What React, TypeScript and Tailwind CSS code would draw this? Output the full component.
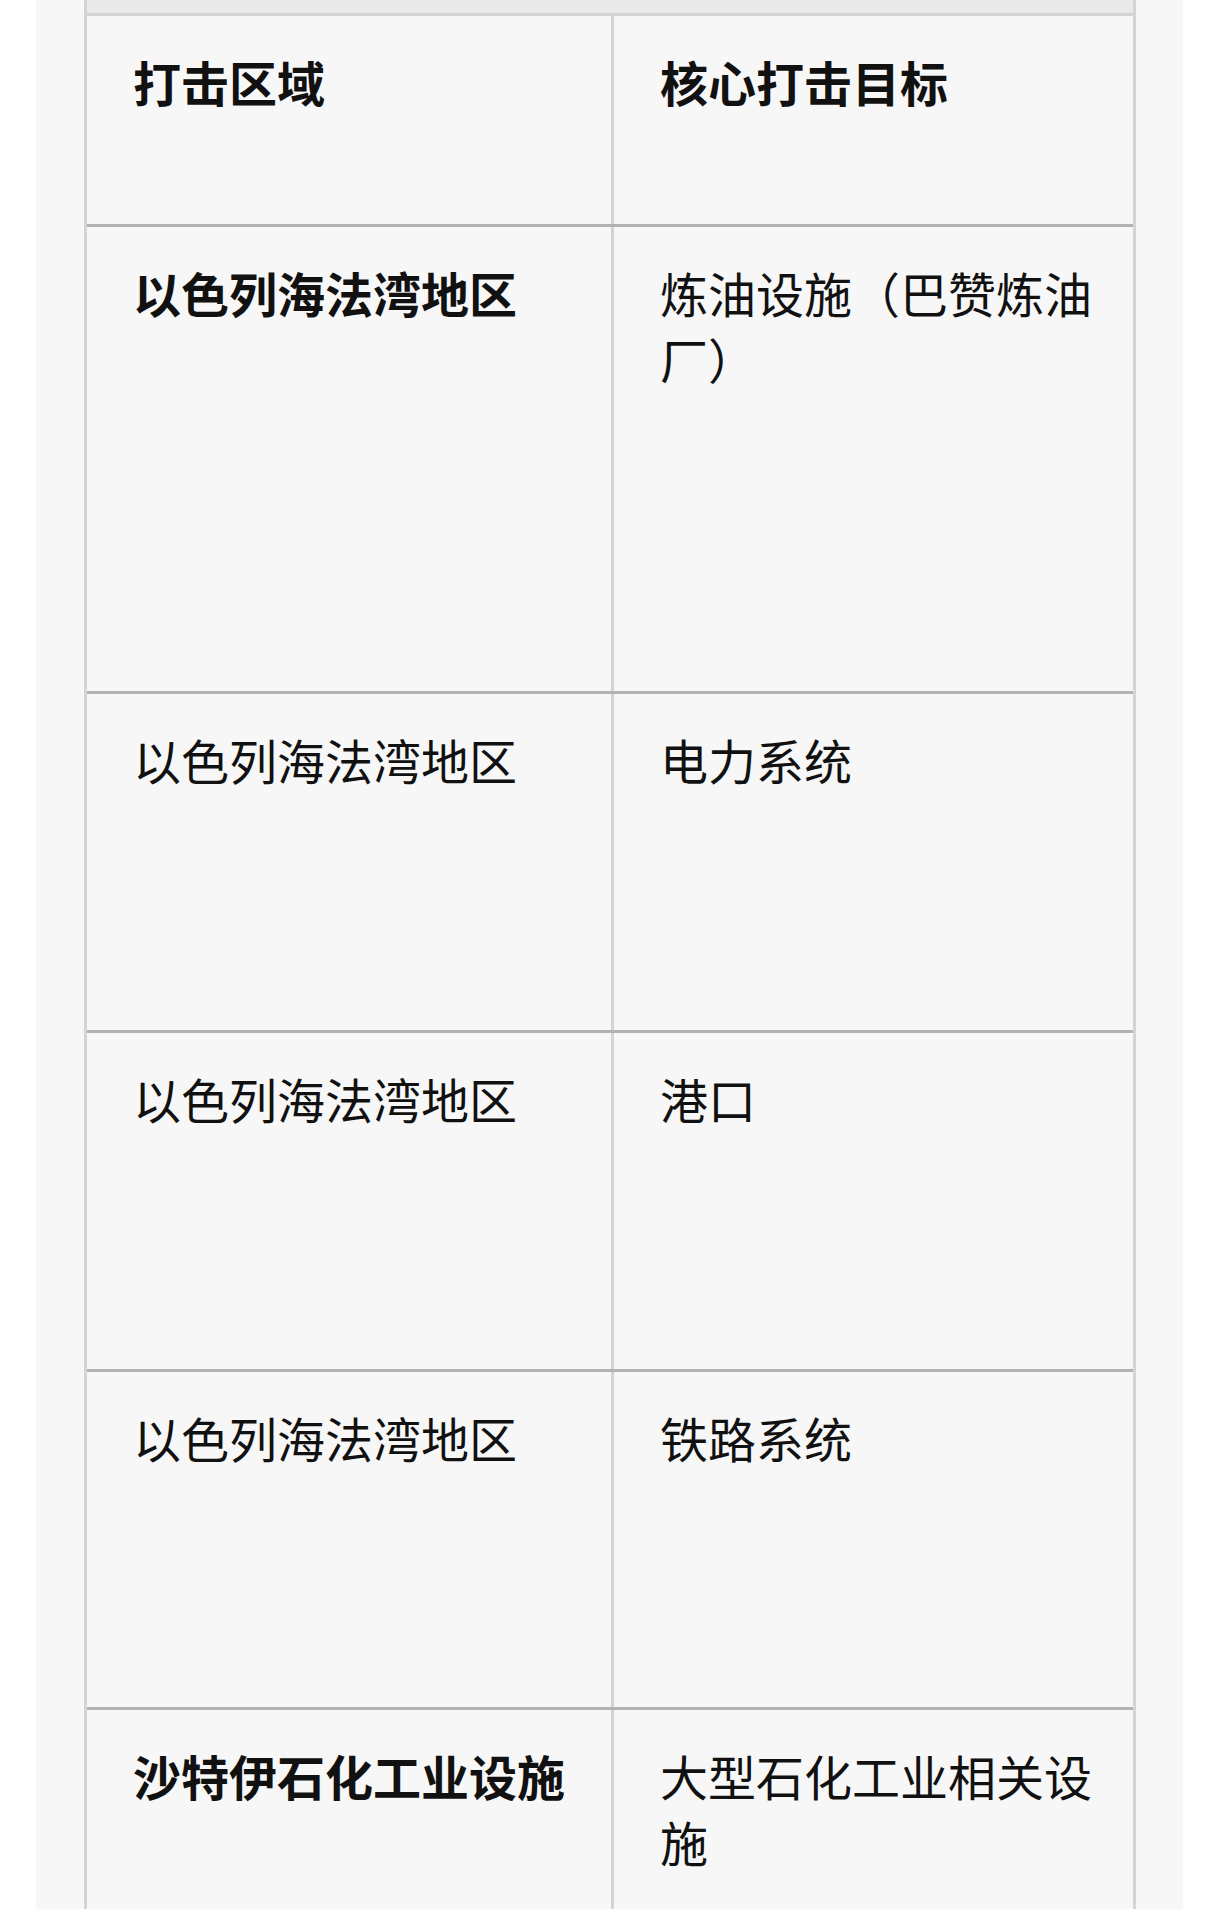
import React from "react";

type Row = { left: string; right: string; leftBold?: boolean; rightBold?: boolean; h: string };

const rows: Row[] = [
  { left: "打击区域", right: "核心打击目标", leftBold: true, rightBold: true, h: "h-[211px]" },
  { left: "以色列海法湾地区", right: "炼油设施（巴赞炼油厂）", leftBold: true, h: "h-[467px]" },
  { left: "以色列海法湾地区", right: "电力系统", h: "h-[339px]" },
  { left: "以色列海法湾地区", right: "港口", h: "h-[339px]" },
  { left: "以色列海法湾地区", right: "铁路系统", h: "h-[338px]" },
  { left: "沙特伊石化工业设施", right: "大型石化工业相关设施", leftBold: true, h: "h-[339px]" },
];

export default function App() {
  return (
    <div className="h-[1909px] w-[1220px] overflow-hidden bg-white">
      <div
        className="ml-[36px] w-[1147px] h-full bg-[#f7f7f7] pl-[48px]"
        style={{ fontFamily: '"Noto Sans CJK SC", "Noto Sans", sans-serif' }}
      >
        <div className="w-[1052px] border-x-[3px] border-[#d4d4d4]">
          <div className="h-[16px] bg-[#e9e9e9] border-b-[3px] border-[#d3d3d3]" />
          {rows.map((r, i) => (
            <div
              key={i}
              className={`flex ${r.h} ${i < rows.length - 1 ? "border-b-[3px] border-[#b3b3b3]" : ""}`}
            >
              <div
                className={`w-[527px] shrink-0 border-r-[3px] border-[#d4d4d4] pl-[46px] pr-[40px] pt-[32px] text-[48px] leading-[66px] text-[#111] ${
                  r.leftBold ? "font-bold" : "font-normal"
                }`}
              >
                {r.left}
              </div>
              <div
                className={`w-[519px] shrink-0 pl-[46px] pr-[40px] pt-[32px] text-[48px] leading-[66px] text-[#111] ${
                  r.rightBold ? "font-bold" : "font-normal"
                }`}
              >
                {r.right}
              </div>
            </div>
          ))}
        </div>
      </div>
    </div>
  );
}
